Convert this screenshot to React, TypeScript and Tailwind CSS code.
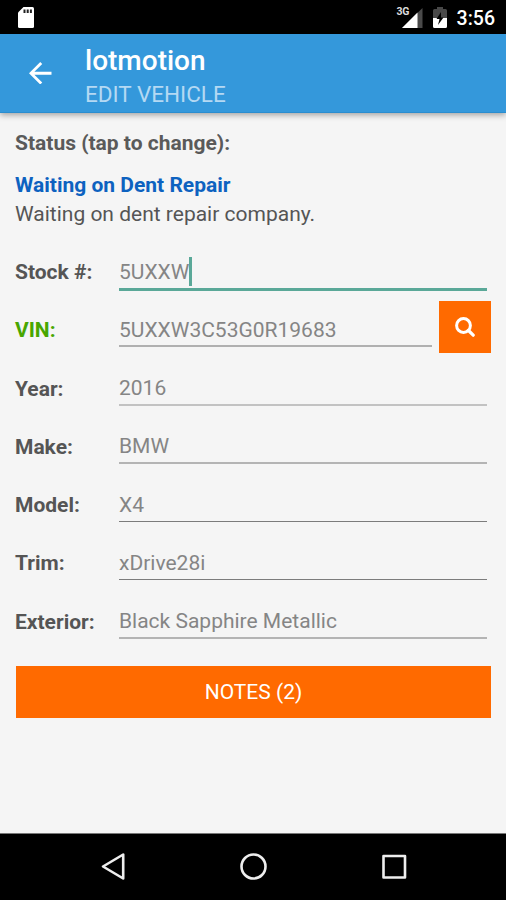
type Field = {
    label: string;
    value: string;
    line: string;
    labelColor?: string;
    focused?: boolean;
    search?: boolean;
};

const fields: Field[] = [
    { label: "Stock #:", value: "5UXXW", line: "h-[3px] bg-[#5aa898]", focused: true },
    { label: "VIN:", value: "5UXXW3C53G0R19683", line: "-mt-px h-[2px] bg-[#b0b0b0]", labelColor: "text-[#48a600]", search: true },
    { label: "Year:", value: "2016", line: "-mt-px h-[2px] bg-[#c2c2c2]" },
    { label: "Make:", value: "BMW", line: "-mt-px h-[2px] bg-[#b4b4b4]" },
    { label: "Model:", value: "X4", line: "h-px bg-[#7c7c7c]" },
    { label: "Trim:", value: "xDrive28i", line: "h-px bg-[#7c7c7c]" },
    { label: "Exterior:", value: "Black Sapphire Metallic", line: "-mt-px h-[2px] bg-[#b4b4b4]" },
];

function StatusBar() {
    return (
        <div className="flex h-[34px] items-start bg-black pl-[18px] pr-[11px] text-white">
            <svg className="mt-[7px]" width="16" height="21" viewBox="0 0 16 21">
                <path d="M5.500 0h9A1.500 1.500 0 0 1 16 1.500v18a1.500 1.500 0 0 1-1.500 1.500h-13A1.500 1.500 0 0 1 0 19.500V5.500z" fill="#fff" />
                <path d="M5.500 2.500h2V6h-2zM8.700 2.500h2V6h-2zM11.900 2.500h2V6h-2z" fill="#222" />
            </svg>
            <div className="ml-auto flex items-start">
                <div className="relative mt-[8px] h-[20px] w-[25px]">
                    <svg width="25" height="20" viewBox="0 0 25 20">
                        <path d="M24.500 0v20H4z" fill="#4a4a4a" />
                        <path d="M13 0h6v4l-6 6z" fill="#000" />
                        <path d="M19.500 4.500V20H4z" fill="#fff" />
                    </svg>
                    <span className="absolute -left-px -top-px text-[10.5px] font-bold leading-[10px] tracking-[-0.5px] text-[#ddd]">3G</span>
                </div>
                <svg className="ml-[10px] mt-[7px]" width="14" height="21" viewBox="0 0 14 21">
                    <path d="M4 0h6v2h2.500A1.500 1.500 0 0 1 14 3.500V11H0V3.500A1.500 1.500 0 0 1 1.500 2H4z" fill="#484848" />
                    <path d="M0 11h14v8.500a1.500 1.500 0 0 1-1.500 1.500h-11A1.500 1.500 0 0 1 0 19.500z" fill="#fff" />
                    <path d="M8 5L3.500 12H6.500L5 18l5.500-7.500H8z" fill="#000" />
                </svg>
                <span className="ml-[10px] mt-[7px] text-[19.5px] font-medium leading-[24px]">3:56</span>
            </div>
        </div>
    );
}

function AppBar() {
    return (
        <header className="z-10 flex h-[79px] items-center border-b border-[#2a8dcf] bg-[#3498db] pl-[29px] shadow-[0_2px_6px_rgba(0,0,0,0.35)]">
            <svg width="22.500" height="22.500" viewBox="4 4 16 16" fill="#fff">
                <path d="M20 11H7.830l5.590-5.590L12 4l-8 8 8 8 1.410-1.410L7.830 13H20v-2z" />
            </svg>
            <div className="ml-[33.5px] pt-[7px]">
                <h1 className="text-[28px] font-medium leading-[34px] text-white">lotmotion</h1>
                <p className="text-[22.5px] leading-[32px] text-[#b4d9f3]">EDIT VEHICLE</p>
            </div>
        </header>
    );
}

function FieldRow({ label, value, line, labelColor = "text-[#555]", focused, search }: Field) {
    return (
        <div className="flex h-[58.3px] items-start">
            <label className={`w-[104px] pt-[16px] font-bold leading-[26px] ${labelColor}`}>{label}</label>
            <div className={search ? "w-[313px]" : "w-[368px]"}>
                <div className="flex h-[45px] items-start pt-[15.5px] leading-[26px] text-[#858585]">
                    <span>{value}</span>
                    {focused && <span className="-mt-[2px] h-[29px] w-[3px] bg-[#5aa898]" />}
                </div>
                <div className={line} />
            </div>
            {search && (
                <button className="ml-[7px] flex size-[52px] items-center justify-center bg-[#ff6a00]">
                    <svg width="20" height="20" viewBox="0 0 20 20" fill="none" stroke="#fff">
                        <circle cx="8.500" cy="8.500" r="6.900" strokeWidth="3" />
                        <path d="M13.500 13.500l4.700 4.700" strokeWidth="3.200" strokeLinecap="round" />
                    </svg>
                </button>
            )}
        </div>
    );
}

function NavBar() {
    return (
        <nav className="h-[67px] border-t border-[#777] bg-black">
            <svg width="506" height="66" viewBox="0 0 506 66" fill="none" stroke="#eee" strokeWidth="2.6" strokeLinejoin="round">
                <path d="M103 32.500L123.200 20.500v24z" />
                <circle cx="253.500" cy="32.500" r="12" />
                <rect x="383.500" y="22" width="21.500" height="21.500" />
            </svg>
        </nav>
    );
}

export default function App() {
    return (
        <div className="flex h-[900px] w-[506px] flex-col overflow-hidden bg-[#f5f5f5] font-[Roboto,sans-serif]">
            <StatusBar />
            <AppBar />
            <main className="flex-1 pl-[15px] text-[21px]">
                <h2 className="mt-[16px] font-bold leading-[28px] text-[#5a5a5a]">Status (tap to change):</h2>
                <div className="mt-[14px]">
                    <div className="font-bold leading-[29px] text-[#0d62c0]">Waiting on Dent Repair</div>
                    <div className="leading-[29px] text-[#555]">Waiting on dent repair company.</div>
                </div>
                <div className="mt-[14px]">
                    {fields.map((field) => (
                        <FieldRow key={field.label} {...field} />
                    ))}
                </div>
                <button className="ml-px mt-[15px] flex h-[52px] w-[475px] items-center justify-center bg-[#ff6a00] pt-[2px] text-white">
                    NOTES (2)
                </button>
            </main>
            <NavBar />
        </div>
    );
}
